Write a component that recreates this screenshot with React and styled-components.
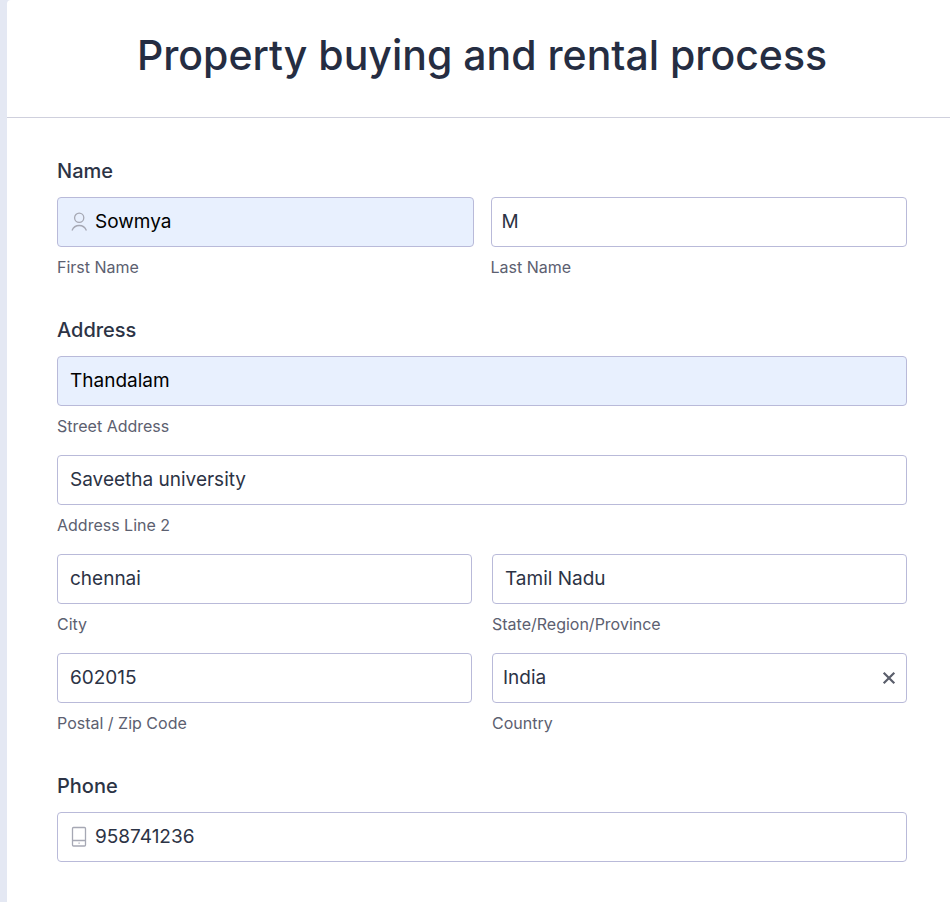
import React from "react";
import styled, { createGlobalStyle } from "styled-components";

const GlobalStyle = createGlobalStyle`
  *, *::before, *::after { box-sizing: border-box; }
  body {
    margin: 0;
    background: #e4e8f3;
    font-family: Inter, "Liberation Sans", sans-serif;
    color: #2c3345;
  }
`;

const FormCard = styled.form`
  margin-left: 7px;
  min-height: 100vh;
  background: #fff;
  border-top-left-radius: 4px;
`;

const Header = styled.header`
  padding: 30px 43px 36px 50px;
  border-bottom: 1px solid #cfd0dd;
  text-align: center;
`;

const Title = styled.h1`
  margin: 0;
  font-size: 41px;
  line-height: 51px;
  font-weight: 500;
  color: #252d42;
`;

const Body = styled.div`
  display: flex;
  flex-direction: column;
  gap: 40px;
  padding: 41px 43px 40px 50px;
`;

const Group = styled.fieldset`
  min-width: 0;
  margin: 0;
  padding: 0;
  border: 0;
`;

const GroupTitle = styled.legend`
  display: block;
  padding: 0;
  margin-bottom: 13px;
  font-size: 20px;
  line-height: 25px;
  font-weight: 480;
`;

const Grid = styled.div`
  display: grid;
  grid-template-columns: 1fr 1fr;
  gap: 18px ${(p) => p.$gap || 20}px;
`;

const Field = styled.div`
  min-width: 0;
  grid-column: ${(p) => (p.$wide ? "1 / -1" : "auto")};
`;

const Control = styled.div`
  display: flex;
  align-items: center;
  height: 50px;
  padding: 0 ${(p) => p.$pad || 12}px;
  border: 1px solid #b9bad9;
  border-radius: 4px;
  background: ${(p) => (p.$filled ? "#e8f0fe" : "#fff")};
  color: ${(p) => (p.$filled ? "#000" : "#2c3345")};
`;

const Input = styled.input`
  flex: 1;
  min-width: 0;
  height: 100%;
  padding: 0 0 2px;
  border: 0;
  outline: 0;
  background: transparent;
  color: inherit;
  font-family: inherit;
  font-size: 19px;
  font-weight: 390;
`;

const SubLabel = styled.label`
  display: block;
  margin-top: 9px;
  font-size: 16px;
  line-height: 22px;
  color: #5c6070;
`;

const FieldIcon = styled.svg`
  flex: none;
  width: 20px;
  height: 24px;
  margin-right: 5px;
  fill: none;
  stroke: #a6a8b4;
  stroke-width: 1.3;
`;

const ClearButton = styled.button`
  display: flex;
  padding: 0;
  border: 0;
  background: transparent;
  color: #5a5e6b;
`;

function UserIcon() {
  return (
    <FieldIcon viewBox="0 0 20 24" aria-hidden="true">
      <circle cx="9.2" cy="7.700" r="4.600" />
      <path d="M2 20.500C3.300 17.300 6 15.500 9.200 15.500s5.900 1.800 7.200 5" />
    </FieldIcon>
  );
}

function PhoneIcon() {
  return (
    <FieldIcon viewBox="0 0 20 24" aria-hidden="true">
      <rect x="2.500" y="2.500" width="13" height="18.500" rx="1" />
      <path d="M2.500 15.500h13M8.500 18.200h1.200" />
    </FieldIcon>
  );
}

function TextField({ id, label, ariaLabel, value, wide, filled, pad, icon, type = "text", children }) {
  return (
    <Field $wide={wide}>
      <Control $filled={filled} $pad={pad}>
        {icon}
        <Input id={id} type={type} defaultValue={value} aria-label={ariaLabel} />
        {children}
      </Control>
      {label && <SubLabel htmlFor={id}>{label}</SubLabel>}
    </Field>
  );
}

export default function App() {
  return (
    <>
      <GlobalStyle />
      <FormCard>
        <Header>
          <Title>Property buying and rental process</Title>
        </Header>
        <Body>
          <Group>
            <GroupTitle>Name</GroupTitle>
            <Grid $gap={17}>
              <TextField id="first" label="First Name" value="Sowmya" filled icon={<UserIcon />} />
              <TextField id="last" label="Last Name" value="M" pad={10} />
            </Grid>
          </Group>
          <Group>
            <GroupTitle>Address</GroupTitle>
            <Grid>
              <TextField id="street" label="Street Address" value="Thandalam" wide filled />
              <TextField id="line2" label="Address Line 2" value="Saveetha university" wide />
              <TextField id="city" label="City" value="chennai" />
              <TextField id="state" label="State/Region/Province" value="Tamil Nadu" />
              <TextField id="zip" label="Postal / Zip Code" value="602015" />
              <TextField id="country" label="Country" value="India" pad={10}>
                <ClearButton type="button" aria-label="Clear country">
                  <svg width="14" height="14" viewBox="0 0 14 14" fill="none" stroke="currentColor" strokeWidth="2.2">
                    <path d="M1.700 1.700l10.600 10.600M12.300 1.700l-10.600 10.600" />
                  </svg>
                </ClearButton>
              </TextField>
            </Grid>
          </Group>
          <Group>
            <GroupTitle>Phone</GroupTitle>
            <TextField id="phone" type="tel" ariaLabel="Phone" value="958741236" icon={<PhoneIcon />} />
          </Group>
        </Body>
      </FormCard>
    </>
  );
}
